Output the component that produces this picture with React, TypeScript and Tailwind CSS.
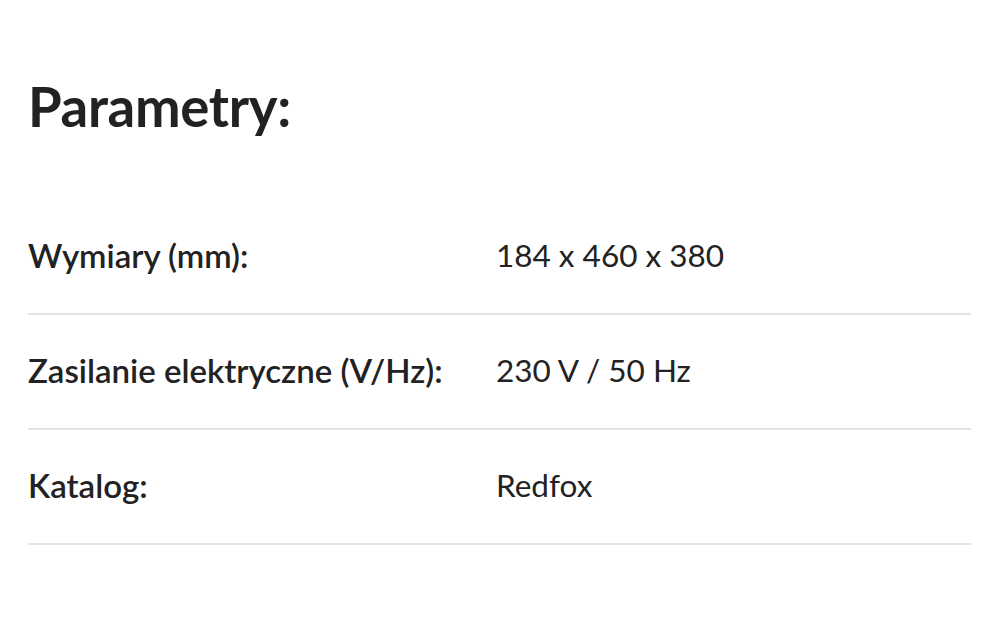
const ROWS = [
  { label: "Wymiary (mm):", value: "184 x 460 x 380" },
  { label: "Zasilanie elektryczne (V/Hz):", value: "230 V / 50 Hz" },
  { label: "Katalog:", value: "Redfox" },
];

export default function App() {
  return (
    <div
      className="w-[999px] h-[619px] bg-white text-[#222] pl-[28px] pr-[28px] pt-[68px]"
      style={{ fontFamily: "Lato, 'Noto Sans', sans-serif" }}
    >
      <h2 className="text-[54.5px] leading-[76px] font-bold tracking-[-0.3px]">
        Parametry:
      </h2>
      <div className="mt-[56px]">
        {ROWS.map((row) => (
          <div
            key={row.label}
            className="flex items-center h-[115px] border-b-2 border-[#e3e3e3] pb-[2px]"
          >
            <div className="w-[468px] text-[33px] font-semibold">{row.label}</div>
            <div className="text-[31.5px]">{row.value}</div>
          </div>
        ))}
      </div>
    </div>
  );
}
